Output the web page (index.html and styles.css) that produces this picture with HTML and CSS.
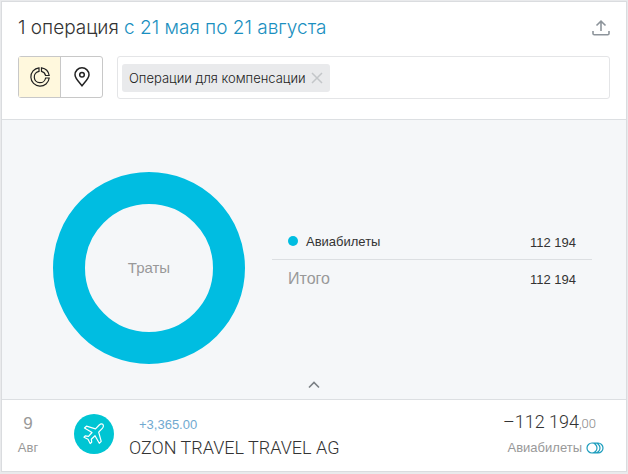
FILE: index.html
```
<!DOCTYPE html>
<html lang="ru">
<head>
    <meta charset="UTF-8">
    <meta name="viewport" content="width=device-width, initial-scale=1.0">
    <title>Операции</title>
    <link rel="stylesheet" href="styles.css">
</head>
<body>
    <main class="card">
        <header class="header">
            <div class="title-row">
                <h1 class="title">1 операция <a href="#" class="period">с 21 мая по 21 августа</a></h1>
                <button type="button" class="export" aria-label="Экспорт">
                    <svg width="18" height="16" viewBox="0 0 18 16" fill="none" stroke="#8d949b" stroke-width="1.6">
                        <path d="M9 11V1.5M4.5 5.5L9 1.2l4.500 4.300M1 11v2.500q0 1.300 1.300 1.300h13.400q1.300 0 1.300-1.300V11"/>
                    </svg>
                </button>
            </div>
            <div class="filter-row">
                <div class="views">
                    <button type="button" class="view view-active" aria-label="Диаграмма" aria-pressed="true">
                        <svg width="20" height="20" viewBox="0 0 20 20" fill="none" stroke="#222" stroke-width="1.2">
                            <path d="M9 .8A9.200 9.200 0 1 0 19.200 11H15.600A5.700 5.700 0 1 1 9 4.400Z"/>
                            <path d="M11.500 .8A9.200 9.200 0 0 1 19.200 8.500H15.600A5.700 5.700 0 0 0 11.500 4.400Z"/>
                        </svg>
                    </button>
                    <button type="button" class="view" aria-label="Карта" aria-pressed="false">
                        <svg width="16" height="20" viewBox="0 0 16 20" fill="none" stroke="#222" stroke-width="1.500">
                            <path d="M8 18.700C5 15 1 11.500 1 7.800a7 7 0 0 1 14 0C15 11.500 11 15 8 18.700Z"/>
                            <circle cx="8" cy="7.800" r="2.300"/>
                        </svg>
                    </button>
                </div>
                <div class="filter">
                    <span class="chip">
                        Операции для компенсации
                        <button type="button" class="chip-remove" aria-label="Убрать фильтр">
                            <svg width="12" height="12" viewBox="0 0 12 12" fill="none" stroke="#c3c6c9" stroke-width="1.500">
                                <path d="M1 1l10 10M11 1L1 11"/>
                            </svg>
                        </button>
                    </span>
                    <input type="text" class="filter-input" aria-label="Поиск по операциям">
                </div>
            </div>
        </header>

        <section class="chart">
            <div class="chart-body">
                <div class="donut">Траты</div>
                <table class="legend">
                    <tr>
                        <th scope="row"><span class="dot"></span>Авиабилеты</th>
                        <td>112 194</td>
                    </tr>
                    <tr class="total">
                        <th scope="row">Итого</th>
                        <td>112 194</td>
                    </tr>
                </table>
            </div>
            <button type="button" class="collapse" aria-label="Свернуть">
                <svg width="12" height="8" viewBox="0 0 12 8" fill="none" stroke="#7b8085" stroke-width="1.600">
                    <path d="M1 6.500l5-5 5 5"/>
                </svg>
            </button>
        </section>

        <article class="operation">
            <div class="date">
                <span class="day">9</span>
                <span class="month">Авг</span>
            </div>
            <div class="category-icon">
                <svg width="24" height="24" viewBox="0 0 24 24" fill="none" stroke="#fff" stroke-width="1.200" stroke-linejoin="round">
                    <path d="M20.800 2.300C19.800 1.500 18.300 2 17.200 3L13.500 6.800 4.500 4.200 2.500 6 10 10.500 6.500 14.300 3.200 13.800 2 15.200 6 17.300 8.200 21.500 9.700 20.200 9.300 17.200 13 13.700 17.300 21.300 19.200 19.400 16.700 10.200 20.300 6.400C21.500 5.200 21.800 3.300 20.800 2.300Z"/>
                </svg>
            </div>
            <div class="details">
                <span class="bonus">+3,365.00</span>
                <span class="merchant">OZON TRAVEL TRAVEL AG</span>
            </div>
            <div class="sum">
                <span class="amount">–112 194<span class="cents">,00</span></span>
                <span class="category">Авиабилеты
                    <svg width="18" height="12" viewBox="0 0 18 12" fill="none" stroke="#1c9dbd" stroke-width="1.200">
                        <path d="M6 1h6a5 5 0 0 1 0 10H6A5 5 0 0 1 6 1M6 1a5 5 0 0 1 0 10M9 1a5 5 0 0 1 0 10"/>
                    </svg>
                </span>
            </div>
        </article>
    </main>
</body>
</html>
```
FILE: styles.css
```
* {
    box-sizing: border-box;
}
body {
    margin: 0;
    padding: 1px;
    background: #e9eaec;
    font-family: "Liberation Sans", Arial, sans-serif;
    font-size: 13px;
    line-height: 16px;
    color: #333;
}
button {
    padding: 0;
    border: 0;
    background: none;
    cursor: pointer;
}
svg {
    display: block;
}
.card {
    border: 1px solid #dadcdf;
    background: #fff;
}
.header {
    padding: 14px 16px 20px;
}
.title-row {
    display: flex;
    align-items: center;
    justify-content: space-between;
}
.title {
    margin: 0;
    font-family: Inter, sans-serif;
    font-size: 19px;
    font-weight: 300;
    line-height: 24px;
}
.period {
    color: #1a8fc0;
    text-decoration: none;
}
.filter-row {
    display: flex;
    gap: 14px;
    margin-top: 16px;
}
.views {
    display: flex;
    width: 85px;
    height: 42px;
    border: 1px solid #c8c8c8;
    border-radius: 3px;
}
.view {
    display: flex;
    flex: 1;
    align-items: center;
    justify-content: center;
}
.view-active {
    border-right: 1px solid #c8c8c8;
    background: #fff8dd;
}
.filter {
    display: flex;
    flex: 1;
    align-items: center;
    height: 43px;
    padding: 0 4px;
    border: 1px solid #e4e5e7;
    border-radius: 3px;
}
.chip {
    display: flex;
    align-items: center;
    gap: 5px;
    height: 28px;
    padding: 0 7px;
    border-radius: 3px;
    background: #e9eaec;
    color: #222;
    font-family: Inter, sans-serif;
    font-weight: 300;
    white-space: nowrap;
}
.filter-input {
    flex: 1;
    min-width: 0;
    border: 0;
    outline: 0;
    background: none;
}
.chart {
    border-top: 1px solid #dcdfe2;
    border-bottom: 1px solid #dcdfe2;
    background: #f5f7f9;
}
.chart-body {
    display: flex;
    align-items: flex-start;
    gap: 27px;
    padding: 52px 34px 0 51px;
}
.donut {
    display: flex;
    flex: none;
    align-items: center;
    justify-content: center;
    width: 192px;
    height: 192px;
    border: 32px solid #00bde1;
    border-radius: 50%;
    color: #999;
    font-size: 15px;
}
.legend {
    flex: 1;
    margin-top: 50px;
    border-collapse: collapse;
}
.legend th {
    height: 37px;
    padding: 3px 16px 0;
    font-weight: normal;
    text-align: left;
}
.legend td {
    padding: 5px 16px 0;
    text-align: right;
}
.dot {
    display: inline-block;
    width: 10px;
    height: 10px;
    margin-right: 8px;
    border-radius: 50%;
    background: #00bde1;
}
.total {
    border-top: 1px solid #dcdfe2;
}
.legend .total th {
    color: #999;
    font-size: 16px;
}
.collapse {
    display: flex;
    align-items: center;
    justify-content: center;
    width: 100%;
    height: 35px;
    padding-top: 6px;
}
.operation {
    display: flex;
    align-items: center;
    height: 71px;
    padding: 0 22px 0 0;
}
.date {
    display: flex;
    flex-direction: column;
    align-items: center;
    gap: 6px;
    width: 52px;
    padding-bottom: 2px;
    color: #999;
}
.day {
    font-size: 17px;
    line-height: 20px;
}
.category-icon {
    display: flex;
    align-items: center;
    justify-content: center;
    width: 40px;
    height: 40px;
    margin: 0 15px 4px 20px;
    border-radius: 50%;
    background: #00c5d3;
}
.details {
    display: flex;
    flex: 1;
    flex-direction: column;
    gap: 4px;
    padding-top: 4px;
}
.bonus {
    padding-left: 10px;
    color: #70a9d0;
}
.merchant {
    font-family: Roboto, sans-serif;
    font-size: 18px;
    font-weight: 300;
    line-height: 22px;
}
.sum {
    display: flex;
    flex-direction: column;
    align-items: flex-end;
    gap: 6px;
    padding-bottom: 3px;
}
.amount {
    padding-right: 8px;
    font-family: Roboto, sans-serif;
    font-size: 18px;
    font-weight: 300;
    line-height: 20px;
}
.cents {
    color: #888;
    font-size: 13px;
}
.category {
    display: flex;
    align-items: center;
    gap: 4px;
    color: #999;
}
```
